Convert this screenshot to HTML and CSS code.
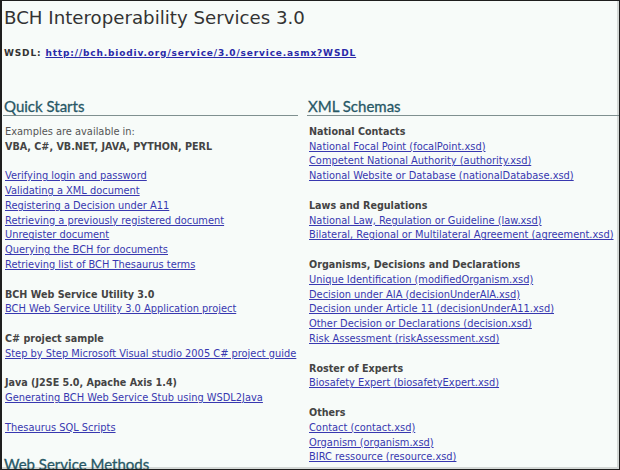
FILE: index.html
```html
<!DOCTYPE html>
<html>
<head>
<meta charset="utf-8">
<link rel="stylesheet" href="styles.css">
</head>
<body>
<div class="frame">
  <h1 class="title">BCH Interoperability Services 3.0</h1>
  <p class="wsdl">WSDL: <a href="#">http://bch.biodiv.org/service/3.0/service.asmx?WSDL</a></p>
  <div class="cols">
    <div class="col">
      <h2 class="sec">Quick Starts</h2>
      <p class="plain">Examples are available in:</p>
      <p class="label spaced">VBA, C#, VB.NET, JAVA, PYTHON, PERL</p>
      <ul class="links">
        <li><a href="#">Verifying login and password</a></li>
        <li><a href="#">Validating a XML document</a></li>
        <li><a href="#">Registering a Decision under A11</a></li>
        <li><a href="#">Retrieving a previously registered document</a></li>
        <li><a href="#">Unregister document</a></li>
        <li><a href="#">Querying the BCH for documents</a></li>
        <li><a href="#">Retrieving list of BCH Thesaurus terms</a></li>
      </ul>
      <p class="label">BCH Web Service Utility 3.0</p>
      <ul class="links">
        <li><a href="#">BCH Web Service Utility 3.0 Application project</a></li>
      </ul>
      <p class="label">C# project sample</p>
      <ul class="links">
        <li><a href="#">Step by Step Microsoft Visual studio 2005 C# project guide</a></li>
      </ul>
      <p class="label">Java (J2SE 5.0, Apache Axis 1.4)</p>
      <ul class="links">
        <li><a href="#">Generating BCH Web Service Stub using WSDL2Java</a></li>
      </ul>
      <ul class="links">
        <li><a href="#">Thesaurus SQL Scripts</a></li>
      </ul>
      <h2 class="sec sec-next">Web Service Methods</h2>
    </div>
    <div class="col">
      <h2 class="sec">XML Schemas</h2>
      <p class="label">National Contacts</p>
      <ul class="links">
        <li><a href="#">National Focal Point (focalPoint.xsd)</a></li>
        <li><a href="#">Competent National Authority (authority.xsd)</a></li>
        <li><a href="#">National Website or Database (nationalDatabase.xsd)</a></li>
      </ul>
      <p class="label">Laws and Regulations</p>
      <ul class="links">
        <li><a href="#">National Law, Regulation or Guideline (law.xsd)</a></li>
        <li><a href="#">Bilateral, Regional or Multilateral Agreement (agreement.xsd)</a></li>
      </ul>
      <p class="label">Organisms, Decisions and Declarations</p>
      <ul class="links">
        <li><a href="#">Unique Identification (modifiedOrganism.xsd)</a></li>
        <li><a href="#">Decision under AIA (decisionUnderAIA.xsd)</a></li>
        <li><a href="#">Decision under Article 11 (decisionUnderA11.xsd)</a></li>
        <li><a href="#">Other Decision or Declarations (decision.xsd)</a></li>
        <li><a href="#">Risk Assessment (riskAssessment.xsd)</a></li>
      </ul>
      <p class="label">Roster of Experts</p>
      <ul class="links">
        <li><a href="#">Biosafety Expert (biosafetyExpert.xsd)</a></li>
      </ul>
      <p class="label">Others</p>
      <ul class="links">
        <li><a href="#">Contact (contact.xsd)</a></li>
        <li><a href="#">Organism (organism.xsd)</a></li>
        <li><a href="#">BIRC ressource (resource.xsd)</a></li>
      </ul>
    </div>
  </div>
</div>
</body>
</html>
```
FILE: styles.css
```css
html, body {
  margin: 0;
  padding: 0;
  background: #ffffff;
}
.frame {
  box-sizing: border-box;
  width: 620px;
  height: 470px;
  overflow: hidden;
  border: 1px solid #1e1e1e;
  border-left-width: 2px;
  background: #f7fbf9;
  box-shadow: inset -2px -2px 0 #d4d8d6;
  padding: 0 0 0 1px;
  font-family: "DejaVu Sans", Verdana, sans-serif;
  font-size: 9.85px;
  line-height: 14.8px;
  color: #555;
}
.title {
  margin: 4px 0 0 1px;
  font-family: "DejaVu Sans", Verdana, sans-serif;
  font-weight: normal;
  font-size: 18.2px;
  line-height: 26px;
  color: #333;
}
.wsdl {
  margin: 15px 0 0 1px;
  font-weight: bold;
  font-size: 9px;
  letter-spacing: 0.85px;
  color: #333;
}
.wsdl a {
  color: #2a2aa8;
}
.cols {
  display: grid;
  grid-template-columns: 295px 1fr;
  column-gap: 9px;
  margin-top: 36px;
}
.sec {
  margin: 0 0 9px 0;
  font-family: "Lato", "Open Sans", sans-serif;
  font-weight: normal;
  font-size: 15px;
  line-height: 18px;
  color: #285866;
  -webkit-text-stroke: 0.3px #285866;
  border-bottom: 1px solid #7f9090;
  padding: 0 0 0 1px;
  white-space: nowrap;
}
.sec-next {
  margin-top: 19px;
  border-bottom: none;
}
.col {
  min-width: 0;
}
.col p, .col ul {
  margin: 0;
  padding: 0 0 0 2px;
  white-space: nowrap;
}
.plain {
  color: #555;
}
.label {
  font-weight: bold;
  font-size: 9.6px;
  color: #444;
}
.col p.spaced {
  margin-bottom: 14.8px;
}
.links {
  list-style: none;
}
.col ul.links {
  margin-bottom: 14.8px;
}
.links a {
  color: #3838b0;
  text-decoration: underline;
}
```
